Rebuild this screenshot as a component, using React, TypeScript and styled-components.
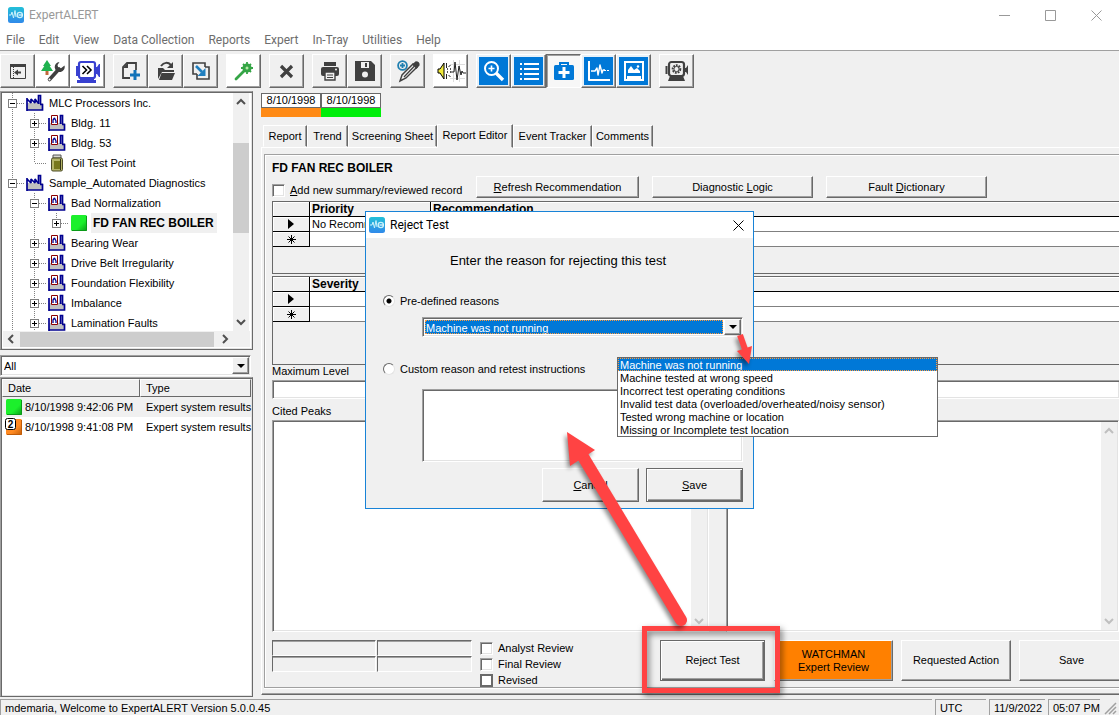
import React, { useState } from "react";
import styled, { createGlobalStyle, css } from "styled-components";

const FACE = "#f0f0f0";
const MID = "#a0a0a0";
const DARK = "#696969";
const BLUE = "#0078d7";
const RED = "#ff4343";

const Global = createGlobalStyle`
  * { box-sizing: border-box; }
  body {
    margin: 0;
    background: ${FACE};
    color: #000;
    font: 11px/16px "Liberation Sans", Arial, sans-serif;
  }
  button, input, select, textarea { font: inherit; color: inherit; margin: 0; border-radius: 0; }
`;

const raised = css`
  background: ${FACE};
  border: 1px solid;
  border-color: #fff ${DARK} ${DARK} #fff;
  box-shadow: inset -1px -1px 0 ${MID};
`;
const sunken = css`
  border: 1px solid;
  border-color: ${MID} #fff #fff ${MID};
  box-shadow: inset 1px 1px 0 ${DARK}, inset -1px -1px 0 #e3e3e3;
`;

const Window = styled.div`
  position: relative;
  display: flex;
  flex-direction: column;
  height: 100vh;
  min-height: 640px;
  overflow: hidden;
`;

/* Title and menu */
const TitleBar = styled.header`
  display: flex;
  align-items: center;
  height: 30px;
  padding-left: 8px;
  gap: 5px;
  background: #fff;
  color: #999;
  font: 12px/16px Roboto, sans-serif;
`;
const TitleText = styled.span`flex: 1;`;
const WindowButtons = styled.div`display: flex;`;
const WindowButton = styled.button`
  display: grid;
  place-items: center;
  width: 46px;
  height: 28px;
  padding: 0;
  border: 0;
  background: none;
`;
const MenuBar = styled.nav`
  display: flex;
  align-items: center;
  gap: 14px;
  height: 20px;
  padding-left: 6px;
  background: #fff;
  color: #6d6d6d;
  font: 12px/16px Roboto, sans-serif;
`;
const MenuItem = styled.button`
  padding: 0;
  border: 0;
  background: none;
  white-space: nowrap;
`;

/* Toolbar */
const Toolbar = styled.div`
  display: flex;
  gap: 8px;
  height: 41px;
  padding-top: 3px;
  border-top: 1px solid ${MID};
  flex: none;
`;
const ToolGroup = styled.div`display: flex;`;
const ToolButton = styled.button<{ $face?: "white" | "blue" | "down" }>`
  ${raised}
  display: grid;
  place-items: center;
  width: 35px;
  height: 34px;
  padding: 0;
  ${p => p.$face === "white" && css`background: #fff;`}
  ${p => p.$face === "blue" && css`
    background: ${BLUE};
    box-shadow: inset -1px -1px 0 ${MID}, inset 0 0 0 2px #e8f1f8;
  `}
  ${p => p.$face === "down" && css`
    border-color: ${DARK} #fff #fff ${DARK};
    background: #f7f7f7;
    box-shadow: inset 1px 1px 0 ${MID};
  `}
`;

/* Work area */
const Work = styled.div`display: flex; flex: 1; min-height: 0;`;
const Side = styled.aside`
  display: flex;
  flex-direction: column;
  width: 253px;
  flex: none;
`;
const TreeBox = styled.div`
  ${sunken}
  display: grid;
  grid-template-columns: 1fr 17px;
  grid-template-rows: 238px 16px;
  padding: 1px 2px 2px;
  background: #fff;
  height: 259px;
  margin-bottom: 5px;
  border-bottom-color: ${DARK};
  border-right-color: ${DARK};
`;
const Tree = styled.ul`
  margin: 0;
  padding: 0;
  list-style: none;
  overflow: hidden;
`;
const TreeRow = styled.li<{ $bold?: boolean }>`
  display: flex;
  align-items: center;
  height: 20px;
  white-space: nowrap;
  svg { flex: none; display: block; }
  ${p => p.$bold && css`font-weight: bold; font-size: 12px;`}
`;
const Expander = styled.button`padding: 0; border: 0; background: none; height: 20px;`;
const TreeIcon = styled.span`width: 18px; margin-left: 1px;`;
const TreeLabel = styled.span<{ $selected?: boolean }>`
  margin-left: 3px;
  padding: 2px 3px 2px 2px;
  ${p => p.$selected && css`background: ${FACE};`}
`;
const VScroll = styled.div`
  display: flex;
  flex-direction: column;
  align-items: center;
  justify-content: space-between;
  width: 16px;
  background: ${FACE};
  padding: 4px 0;
`;
const Thumb = styled.div`width: 16px; height: 90px; background: #cdcdcd; margin-top: -48px;`;
const HScroll = styled.div`
  grid-column: 1 / 3;
  display: flex;
  align-items: center;
  justify-content: space-between;
  background: ${FACE};
  padding: 0 20px 0 3px;
`;
const HThumb = styled.div`width: 194px; height: 15px; background: #cdcdcd; margin-left: -3px;`;

const FilterWrap = styled.div`
  ${sunken}
  display: flex;
  height: 21px;
  padding: 1px;
  background: #fff;
  margin: 0 2px 1px 0;
`;
const PlainSelect = styled.select`
  flex: 1;
  appearance: none;
  border: 0;
  padding: 0 2px;
  background: #fff;
  outline: none;
`;
const DropMark = styled.span`
  ${raised}
  display: grid;
  place-items: center;
  width: 17px;
`;
const ListBox = styled.div`
  ${sunken}
  flex: 1;
  padding: 1px;
  margin-bottom: 2px;
  background: #fff;
  border-right-color: ${DARK};
  border-bottom-color: ${DARK};
`;
const RunTable = styled.table`
  width: 100%;
  table-layout: fixed;
  border-collapse: separate;
  border-spacing: 0;
  white-space: nowrap;
  th {
    height: 17px;
    padding: 0 5px;
    text-align: left;
    font-weight: normal;
    background: ${FACE};
    border: 1px solid;
    border-color: #fff ${DARK} ${DARK} #fff;
  }
  td { height: 20px; padding: 0 0 0 6px; }
  tr:nth-child(1) td { background: ${FACE}; }
`;
const RunCell = styled.div`
  display: flex;
  align-items: center;
  gap: 2px;
  margin-left: -3px;
`;

/* Main panel */
const Main = styled.main`
  display: flex;
  flex-direction: column;
  flex: 1;
  min-width: 0;
  padding: 2px 0 4px 8px;
  overflow: hidden;
`;
const Chips = styled.div`display: flex; margin-bottom: 7px;`;
const Chip = styled.button<{ $color: string }>`
  width: 60px;
  padding: 0 0 9px;
  border: 0;
  background: ${p => p.$color};
  span {
    display: block;
    height: 15px;
    line-height: 13px;
    background: #fff;
    border: 1px solid ${DARK};
  }
`;
const Tabs = styled.div`
  display: flex;
  align-items: flex-end;
  padding-left: 2px;
  height: 24px;
  margin-bottom: -1px;
`;
const Tab = styled.button<{ $w: number; $active?: boolean }>`
  flex: 0 0 ${p => p.$w}px;
  height: 22px;
  padding: 0;
  margin-bottom: 1px;
  white-space: nowrap;
  background: ${FACE};
  border: 1px solid;
  border-color: #fff ${DARK} transparent #fff;
  box-shadow: inset -1px 0 0 ${MID};
  ${p => p.$active && css`
    height: 24px;
    margin-bottom: 0;
    padding-bottom: 3px;
    border-bottom-color: ${FACE};
    position: relative;
  `}
`;
const Page = styled.section`
  flex: 1;
  display: flex;
  min-height: 0;
  padding: 6px 0 6px 2px;
  border: 1px solid;
  border-color: #fff transparent ${DARK} #fff;
  border-right: 0;
  box-shadow: inset 0 -1px 0 ${MID};
`;
const Inner = styled.div`
  flex: 1;
  display: flex;
  flex-direction: column;
  min-width: 0;
  padding: 3px 0 6px 7px;
  border: 1px solid ${MID};
  border-right: 0;
  box-shadow: inset 1px 1px 0 #fff, 0 1px 0 #fff;
`;
const Head = styled.div`
  display: flex;
  align-items: flex-end;
  gap: 13px;
  margin-bottom: 3px;
  height: 40px;
`;
const HeadLeft = styled.div`width: 191px; flex: none;`;
const Heading = styled.h1`
  margin: 0 0 4px;
  font-size: 12px;
  line-height: 20px;
`;
const PushButton = styled.button<{ $w: number; $h: number; $color?: string; $strong?: boolean }>`
  ${raised}
  flex: 0 0 ${p => p.$w}px;
  height: ${p => p.$h}px;
  padding: 0;
  line-height: 13px;
  ${p => p.$color && css`background: ${p.$color};`}
  ${p => p.$strong && css`
    border-color: ${DARK};
    box-shadow: inset 1px 1px 0 #fff, inset -1px -1px 0 ${DARK}, inset -2px -2px 0 ${MID};
  `}
`;
const CheckLabel = styled.label`
  display: flex;
  align-items: center;
  gap: 5px;
  height: 16px;
  white-space: nowrap;
`;
const Check = styled.input<{ $flat?: boolean }>`
  ${sunken}
  appearance: none;
  width: 13px;
  height: 13px;
  flex: none;
  background: #fff;
  ${p => p.$flat && css`border: 2px solid ${DARK}; box-shadow: none;`}
`;

const GridBox = styled.div<{ $h: number }>`
  height: ${p => p.$h}px;
  flex: none;
  border: 1px solid ${DARK};
  border-right: 0;
  & + & { margin-top: 2px; }
`;
const Grid = styled.table`
  width: 100%;
  table-layout: fixed;
  border-collapse: separate;
  border-spacing: 0;
  th, td { height: 15px; padding: 0 2px; line-height: 14px; text-align: left; white-space: nowrap; }
  thead th {
    font-size: 12px;
    border-bottom: 1px solid #000;
    border-right: 1px solid #000;
    box-shadow: inset 1px 1px 0 #fff;
  }
  thead th:last-child { border-right: 0; }
  tbody th {
    border-right: 1px solid #000;
    border-bottom: 1px solid #000;
    box-shadow: inset 1px 1px 0 #fff;
    text-align: center;
  }
  tbody th svg { display: block; margin: 0 auto; }
  td { background: #fff; border-bottom: 1px solid #808080; }
`;
const FieldLabel = styled.label`display: block; height: 12px; line-height: 12px;`;
const LevelInput = styled.input`
  ${sunken}
  flex: none;
  width: 100%;
  height: 19px;
  margin: 3px 0 6px;
  border-right: 0;
  background: #fff;
`;
const Panes = styled.div`
  flex: 1;
  display: grid;
  grid-template-columns: 437px 1fr;
  gap: 17px;
  min-height: 80px;
  margin: 3px 0 8px;
`;
const Pane = styled.div`${sunken} display: flex; background: #fff; padding: 1px;`;
const PaneText = styled.textarea`
  flex: 1;
  min-width: 0;
  resize: none;
  border: 0;
  background: none;
  outline: none;
`;
const Footer = styled.div`display: flex; gap: 8px; height: 41px;`;
const Slots = styled.div`
  display: grid;
  grid-template-columns: 104px 95px;
  grid-template-rows: 16px 16px;
  gap: 0 1px;
  flex: none;
`;
const Slot = styled.div`
  border: 1px solid;
  border-color: ${DARK} #fff #fff ${DARK};
  box-shadow: inset 0 1px 0 ${MID};
`;
const Reviews = styled.div`width: 172px; flex: none;`;
const Marked = styled.div`position: relative; display: flex; margin-right: 1px;`;
const RedFrame = styled.div`
  position: absolute;
  inset: -14px -15px -12px -18px;
  border: 5px solid ${RED};
  filter: drop-shadow(2px 3px 3px rgba(0, 0, 0, 0.5));
  pointer-events: none;
  z-index: 2;
`;

const StatusBar = styled.footer`
  display: flex;
  flex: none;
  gap: 3px;
  height: 16px;
  white-space: nowrap;
  padding-right: 2px;
`;
const StatusCell = styled.span<{ $w?: number }>`
  flex: ${p => (p.$w ? `0 0 ${p.$w}px` : "1")};
  padding-left: 4px;
  border-top: 1px solid ${MID};
  border-left: 1px solid ${MID};
`;

/* Dialog */
const Dialog = styled.div`
  position: absolute;
  left: 365px;
  top: 211px;
  width: 389px;
  border: 1px solid #1883d7;
  background: ${FACE};
  z-index: 3;
`;
const DialogTitle = styled.div`
  display: flex;
  align-items: center;
  gap: 5px;
  height: 26px;
  padding-left: 3px;
  background: #fff;
  font: 12px/16px Roboto, sans-serif;
`;
const CloseButton = styled(WindowButton)`width: 30px; height: 24px;`;
const DialogBody = styled.form`padding: 14px 10px 6px 17px;`;
const Prompt = styled.p`
  margin: 0 10px 23px 0;
  text-align: center;
  font-size: 13px;
  line-height: 18px;
`;
const RadioLabel = styled.label`
  display: flex;
  align-items: center;
  gap: 5px;
  height: 16px;
`;
const Radio = styled.input`
  appearance: none;
  width: 12px;
  height: 12px;
  border: 1px solid;
  border-color: ${DARK} #e3e3e3 #e3e3e3 ${DARK};
  border-radius: 50%;
  background: #fff;
  &:checked { background: radial-gradient(circle, #000 2px, #fff 3px); }
`;
const ReasonWrap = styled(FilterWrap)`margin: 8px 0 24px 39px; height: 20px;`;
const ReasonSelect = styled(PlainSelect)`
  background: ${BLUE};
  color: #fff;
  padding: 0 1px;
  outline: 1px dotted #ff9a3c;
  outline-offset: -1px;
  margin: 1px;
`;
const CustomText = styled.textarea`
  ${sunken}
  display: block;
  width: 321px;
  height: 73px;
  margin: 12px 0 6px 39px;
  background: #fff;
  resize: none;
`;
const DialogButtons = styled.div`display: flex; justify-content: flex-end; gap: 7px;`;
const Options = styled.ul`
  position: absolute;
  left: 617px;
  top: 357px;
  width: 321px;
  margin: 0;
  padding: 0;
  list-style: none;
  background: #fff;
  border: 1px solid ${DARK};
  z-index: 4;
`;
const Option = styled.li<{ $on?: boolean }>`
  height: 13px;
  line-height: 14px;
  padding-left: 2px;
  ${p => p.$on && css`
    background: ${BLUE};
    color: #fff;
    outline: 1px dotted #ff9a3c;
    outline-offset: -1px;
  `}
`;
const Arrows = styled.svg`
  position: absolute;
  left: 550px;
  top: 325px;
  z-index: 5;
  pointer-events: none;
  filter: drop-shadow(-2px 3px 2px rgba(0, 0, 0, 0.45));
`;

const AppIcon = () => (
  <svg width="16" height="16" viewBox="0 0 16 16">
    <defs>
      <linearGradient id="logo" x1="0" y1="0" x2="0" y2="1">
        <stop offset="0" stopColor="#22c0d8" />
        <stop offset="1" stopColor="#3089ea" />
      </linearGradient>
    </defs>
    <rect width="16" height="16" rx="2.5" fill="url(#logo)" />
    <path d="M1 8h2l1-3 1.500 6L7 3.500 8 10" fill="none" stroke="#c9f2fb" strokeWidth="1" />
    <circle cx="11.800" cy="8" r="2.600" fill="none" stroke="#c9f2fb" strokeWidth="1.300" />
    <path d="M10.500 8h4" stroke="#e8fbff" strokeWidth="1.200" />
  </svg>
);

const Chevron = ({ dir, color = "#505050" }: { dir: "up" | "down" | "left" | "right"; color?: string }) => {
  const d = { up: "M1 7l4-4 4 4", down: "M1 3l4 4 4-4", left: "M7 1L3 5l4 4", right: "M3 1l4 4-4 4" }[dir];
  return <svg width="10" height="10" viewBox="0 0 10 10"><path d={d} fill="none" stroke={color} strokeWidth="2" /></svg>;
};
const Triangle = () => <svg width="8" height="4"><path d="M0 0h8L4 4z" fill="#000" /></svg>;
const CloseGlyph = ({ color }: { color: string }) => (
  <svg width="11" height="11"><path d="M.5.5l10 10M10.5.5l-10 10" stroke={color} fill="none" /></svg>
);

const Ink = "#404040";
const icons: Record<string, React.ReactNode> = {
  panel: (
    <svg width="18" height="16" viewBox="0 0 18 16">
      <path d="M1.500 1.500h15v14h-15z" fill="none" stroke={Ink} /><path d="M1 1h16v3H1z" fill={Ink} />
      <path d="M4.500 4v11" stroke={Ink} strokeDasharray="1 1" /><path d="M5 9.500l4-3v2h3v2H9v2z" fill={Ink} />
    </svg>
  ),
  treeWrench: (
    <svg width="26" height="26" viewBox="0 0 26 26">
      <path d="M7 2l4 6H3z" fill="#1fb24f" /><path d="M7 4l6 9H1z" fill="#1fb24f" />
      <path d="M5.500 13h3v4h-3z" fill="#c0693c" />
      <path d="M9.500 21.500L19 11" stroke={Ink} strokeWidth="3.600" strokeLinecap="round" />
      <path d="M24.500 7.500A5 5 0 1 1 19.500 4l-2 3 .8 2.700 2.700.5z" fill={Ink} />
      <circle cx="9.500" cy="21.500" r="1" fill="#fff" />
    </svg>
  ),
  pump: (
    <svg width="26" height="26" viewBox="0 0 26 26">
      <rect x="4" y="4" width="16" height="16" rx="2" fill="#fff" stroke="#3840d0" strokeWidth="2.200" />
      <path d="M2 8v10" stroke="#3840d0" strokeWidth="2" /><path d="M20 9h2l2-3h1v13h-1l-2-3h-2z" fill="#3840d0" />
      <path d="M5 20h14v2h2v3H2v-3h3z" fill="#3840d0" />
      <path d="M7.500 8l4 4-4 4M12 8l4 4-4 4" fill="none" stroke="#000" strokeWidth="1.600" />
    </svg>
  ),
  newDoc: (
    <svg width="20" height="20" viewBox="0 0 20 20">
      <path d="M9 17H2V6l4-4h9v7" fill="none" stroke={Ink} strokeWidth="1.800" /><path d="M2 7l5-5v5z" fill={Ink} />
      <path d="M14 9v10M9 14h10" stroke="#1172b8" strokeWidth="3" />
    </svg>
  ),
  open: (
    <svg width="20" height="20" viewBox="0 0 20 20">
      <path d="M2 18V7h5l2 2h9v2H6z" fill={Ink} /><path d="M5.500 12H19l-3 7H3z" fill={Ink} />
      <path d="M5 5c3-4 7-4 10-1" fill="none" stroke={Ink} strokeWidth="2" /><path d="M17 1v6h-6z" fill={Ink} />
    </svg>
  ),
  copy: (
    <svg width="20" height="20" viewBox="0 0 20 20">
      <path d="M6 13H2V2h12v4" fill="none" stroke={Ink} strokeWidth="1.600" />
      <path d="M14 6h4v12H6v-5" fill="none" stroke={Ink} strokeWidth="1.600" />
      <path d="M5 5l6 6" stroke="#1f7fc0" strokeWidth="2.600" /><path d="M14.500 7v8h-8z" fill="#1f7fc0" />
    </svg>
  ),
  wand: (
    <svg width="20" height="20" viewBox="0 0 20 20">
      <path d="M2 18l8-8" stroke="#35a546" strokeWidth="2.800" strokeLinecap="round" />
      <circle cx="13" cy="7" r="4.600" fill="#35a546" />
      <path d="M13 1v12M7 7h12M9 3l8 8M17 3l-8 8" stroke="#35a546" strokeWidth="1.800" />
      <circle cx="13" cy="7" r="1.500" fill="#b6e9a8" />
    </svg>
  ),
  cross: <svg width="15" height="15"><path d="M2 2l11 11M13 2L2 13" stroke={Ink} strokeWidth="3.200" /></svg>,
  print: (
    <svg width="20" height="20" viewBox="0 0 20 20">
      <path d="M4 1h12v4H4z" fill={Ink} /><rect x="1" y="6" width="18" height="9" rx="2" fill={Ink} />
      <path d="M5 11h10v8H5z" fill={FACE} stroke={Ink} strokeWidth="1.400" /><path d="M7 14h6M7 16.500h6" stroke={Ink} />
      <circle cx="16" cy="8.500" r="1" fill={FACE} />
    </svg>
  ),
  save: (
    <svg width="20" height="20" viewBox="0 0 20 20">
      <path d="M0 0h16l4 4v16H0z" fill={Ink} /><path d="M6 1h8v6H6z" fill={FACE} /><path d="M10 2h2v4h-2z" fill={Ink} />
      <circle cx="10" cy="13.500" r="3" fill={FACE} />
    </svg>
  ),
  pencil: (
    <svg width="24" height="24" viewBox="0 0 24 24">
      <circle cx="6.500" cy="6.500" r="4.400" fill="none" stroke="#1f7fb0" strokeWidth="1.800" />
      <path d="M6.500 4v5M4 6.500h5" stroke="#1f7fb0" strokeWidth="1.800" />
      <path d="M4 22l2-6L17 5l4 3L10 19z" fill={FACE} stroke={Ink} strokeWidth="1.400" />
      <path d="M17 5.500l3-2.500c2 0 3 1 3 3l-2.500 3zM8 18L18 7.500" fill={Ink} stroke={Ink} strokeWidth="1.300" />
    </svg>
  ),
  sound: (
    <svg width="30" height="26" viewBox="0 0 30 26">
      <path d="M17.500 2v22M23.500 2v22M14 6.500h15M14 20.500h15" stroke="#ddd" />
      <path d="M2 11h2l4-6v16l-4-6H2z" fill="#f0e93a" stroke="#000" strokeLinejoin="round" />
      <path d="M10.500 5v5M10.500 16v5M12.500 9l2-2M12.500 17l2 2" stroke="#222" />
      <path d="M11.500 10v6M14.500 10v6" stroke="#555" strokeDasharray="2 1" />
      <path d="M15 14h3l1-10 2 18 2-14 2 9 1-4 1 2h3" fill="none" stroke="#222" strokeLinejoin="round" />
    </svg>
  ),
  zoom: (
    <svg width="22" height="22" viewBox="0 0 22 22" fill="none" stroke="#fff">
      <circle cx="8.500" cy="8.500" r="6.500" strokeWidth="2" /><path d="M8.500 5.500v6M5.500 8.500h6" strokeWidth="1.600" />
      <path d="M13 13l7 7" strokeWidth="3.400" />
    </svg>
  ),
  list: (
    <svg width="20" height="18" viewBox="0 0 20 18" stroke="#fff" strokeWidth="2">
      <path d="M5 2h15M5 7h15M5 12h15M5 17h15M1 2h2M1 7h2M1 12h2M1 17h2" />
    </svg>
  ),
  kit: (
    <svg width="20" height="20" viewBox="0 0 20 20">
      <path d="M6 5V2h8v3" fill="none" stroke={BLUE} strokeWidth="2" /><rect y="4" width="20" height="15" rx="1.500" fill={BLUE} />
      <path d="M10 6v11M4.500 11.500h11" stroke="#fff" strokeWidth="3" />
    </svg>
  ),
  trend: (
    <svg width="24" height="22" viewBox="0 0 24 22" fill="none" stroke="#fff" strokeLinejoin="round">
      <path d="M2 1v19h21" strokeWidth="2" />
      <path d="M4 11h4l2-3 1 7 2-10 2 8 1-3h2" strokeWidth="1.400" /><path d="M17 10.500h6" strokeDasharray="2 1" />
    </svg>
  ),
  image: (
    <svg width="20" height="20" viewBox="0 0 20 20">
      <path d="M1 1h18v18H1z" fill="none" stroke="#fff" strokeWidth="2" /><path d="M3 15h14v4H3z" fill="#fff" />
      <path d="M4 12V9l3-4 3 4 3-2 3 3v2z" fill="#fff" /><circle cx="14" cy="5.500" r="1.200" fill="#fff" />
    </svg>
  ),
  motor: (
    <svg width="24" height="22" viewBox="0 0 24 22">
      <rect x="4" y="2" width="15" height="14" rx="2.500" fill="none" stroke={Ink} strokeWidth="2.200" />
      <path d="M1.500 6v8" stroke={Ink} strokeWidth="2" /><path d="M19 8h2l2-3v10l-2-3h-2z" fill={Ink} />
      <path d="M5 16h13l2 5H3z" fill={Ink} />
      <circle cx="11.500" cy="9" r="3.800" fill="none" stroke={Ink} strokeWidth="2" strokeDasharray="1.800 1" />
      <circle cx="11.500" cy="9" r="2.600" fill="none" stroke={Ink} />
    </svg>
  ),
};

type Tool = { icon: string; name: string; face?: "white" | "blue" | "down" };
const tools: Tool[][] = [
  [{ icon: "panel", name: "Panel" }, { icon: "treeWrench", name: "Setup", face: "white" }, { icon: "pump", name: "Machine", face: "white" }],
  [{ icon: "newDoc", name: "New" }, { icon: "open", name: "Open" }, { icon: "copy", name: "Copy" }],
  [{ icon: "wand", name: "Wizard", face: "white" }],
  [{ icon: "cross", name: "Delete" }],
  [{ icon: "print", name: "Print" }, { icon: "save", name: "Save file" }],
  [{ icon: "pencil", name: "Annotate" }],
  [{ icon: "sound", name: "Listen", face: "white" }],
  [
    { icon: "zoom", name: "Find", face: "blue" }, { icon: "list", name: "List", face: "blue" },
    { icon: "kit", name: "Diagnose", face: "down" }, { icon: "trend", name: "Plot", face: "blue" },
    { icon: "image", name: "Picture", face: "blue" },
  ],
  [{ icon: "motor", name: "Motor" }],
];

const Factory = ({ area }: { area?: boolean }) => (
  <svg width="18" height="18" viewBox="0 0 18 18">
    <path d="M1 16V9h16v7z" fill="#c0c0c0" />
    <path d={area ? "M1 17V4" : "M1 17V4M1 5l4 4V5l4 4V5l3 4"} fill="none" stroke="#000090" strokeWidth="1.700" strokeLinejoin="bevel" />
    <path d="M12.500 10V1.500h2V10M14 10.500h2.500V16H1" fill="none" stroke="#000090" strokeWidth="1.700" />
    {area && <path d="M3.500 1.500h6v9h-6z" fill="#fff" stroke="#8b0000" />}
    {area && <path d="M5 9V6l1.500-2L8 7v2" fill="none" stroke="#000090" strokeWidth="1.300" strokeLinejoin="bevel" />}
  </svg>
);
const Jar = () => (
  <svg width="18" height="18" viewBox="0 0 18 18">
    <path d="M5 1h8v3H5z" fill="#d8d8d0" stroke="#555" /><rect x="3.500" y="4" width="11" height="13" rx="1.500" fill="#b4b468" stroke="#4c4c26" />
    <path d="M6 7h6v8H6z" fill="#77771c" /><path d="M12.500 5v11" stroke="#333318" />
  </svg>
);
const Block = ({ id, a, b, badge }: { id: string; a: string; b: string; badge?: string }) => (
  <svg width="18" height="18" viewBox="0 0 18 18">
    <defs>
      <linearGradient id={id} x1="0" y1="0" x2="1" y2="1"><stop offset="0.600" stopColor={a} /><stop offset="1" stopColor={b} /></linearGradient>
    </defs>
    <rect x="1" y="1" width="16" height="16" rx="1.500" fill={`url(#${id})`} />
    <path d="M2 16.500h14.500V2" fill="none" stroke={b} />
    {badge && <rect x="0.500" y="0.500" width="10" height="11" rx="2" fill="#fff" stroke="#000" />}
    {badge && <text x="5.500" y="9.500" textAnchor="middle" fontSize="10" fontWeight="bold">{badge}</text>}
  </svg>
);

/* Connector cell: v = line passes through, l = last child, "-" / "+" = box, e = box ending the line */
const Connector = ({ kind }: { kind: string }) => {
  const dots = { stroke: "#808080", strokeDasharray: "1 1" };
  const box = kind === "-" || kind === "+" || kind === "e";
  return (
    <svg width="22" height="20" viewBox="0 0 22 20">
      <path d={kind === "l" || kind === "e" ? "M9.500 0v10" : "M9.500 0v20"} {...dots} />
      {kind !== "v" && <path d="M10 10.500h12" {...dots} />}
      {box && <rect x="5.500" y="6.500" width="8" height="8" fill="#fff" stroke="#808080" />}
      {box && <path d={kind === "-" ? "M7 10.500h5" : "M7 10.500h5M9.500 8v5"} stroke="#000" />}
    </svg>
  );
};

const nodes: { cells: string[]; label: string; icon: React.ReactNode; bold?: boolean }[] = [
  { cells: ["-"], label: "MLC Processors Inc.", icon: <Factory /> },
  { cells: ["v", "+"], label: "Bldg. 11", icon: <Factory area /> },
  { cells: ["v", "+"], label: "Bldg. 53", icon: <Factory area /> },
  { cells: ["v", "l"], label: "Oil Test Point", icon: <Jar /> },
  { cells: ["-"], label: "Sample_Automated Diagnostics", icon: <Factory /> },
  { cells: ["v", "-"], label: "Bad Normalization", icon: <Factory area /> },
  { cells: ["v", "v", "e"], label: "FD FAN REC BOILER", icon: <Block id="g1" a="#1cf02c" b="#0a9a18" />, bold: true },
  { cells: ["v", "+"], label: "Bearing Wear", icon: <Factory area /> },
  { cells: ["v", "+"], label: "Drive Belt Irregularity", icon: <Factory area /> },
  { cells: ["v", "+"], label: "Foundation Flexibility", icon: <Factory area /> },
  { cells: ["v", "+"], label: "Imbalance", icon: <Factory area /> },
  { cells: ["v", "+"], label: "Lamination Faults", icon: <Factory area /> },
];

const reasons = [
  "Machine was not running",
  "Machine tested at wrong speed",
  "Incorrect test operating conditions",
  "Invalid test data (overloaded/overheated/noisy sensor)",
  "Tested wrong machine or location",
  "Missing or Incomplete test location",
];
const tabs: [string, number][] = [
  ["Report", 44], ["Trend", 41], ["Screening Sheet", 89], ["Report Editor", 76], ["Event Tracker", 79], ["Comments", 61],
];

const Current = () => <svg width="6" height="10"><path d="M0 0l6 5-6 5z" fill="#000" /></svg>;
const NewRow = () => <svg width="9" height="9"><path d="M4.500 0v9M0 4.500h9M1.500 1.500l6 6M7.500 1.500l-6 6" stroke="#000" /></svg>;

function DataGrid({ first, second, value, h }: { first: string; second: string; value?: string; h: number }) {
  return (
    <GridBox $h={h}>
      <Grid>
        <colgroup><col width="37" /><col width="121" /><col /></colgroup>
        <thead><tr><th aria-label="Row" /><th>{first}</th><th>{second}</th></tr></thead>
        <tbody>
          <tr><th><Current /></th><td colSpan={2}>{value}</td></tr>
          <tr><th><NewRow /></th><td colSpan={2} /></tr>
        </tbody>
      </Grid>
    </GridBox>
  );
}

export default function App() {
  const [reason, setReason] = useState(reasons[0]);
  const [mode, setMode] = useState("preset");
  return (
    <Window>
      <Global />
      <TitleBar>
        <AppIcon />
        <TitleText>ExpertALERT</TitleText>
        <WindowButtons>
          <WindowButton aria-label="Minimize"><svg width="11" height="11"><path d="M0 5.500h11" stroke="#999" /></svg></WindowButton>
          <WindowButton aria-label="Maximize"><svg width="11" height="11"><path d="M.5.5h10v10H.5z" fill="none" stroke="#999" /></svg></WindowButton>
          <WindowButton aria-label="Close"><CloseGlyph color="#999" /></WindowButton>
        </WindowButtons>
      </TitleBar>
      <MenuBar>
        {["File", "Edit", "View", "Data Collection", "Reports", "Expert", "In-Tray", "Utilities", "Help"].map(m => (
          <MenuItem key={m}>{m}</MenuItem>
        ))}
      </MenuBar>
      <Toolbar>
        {tools.map((group, i) => (
          <ToolGroup key={i}>
            {group.map(t => (
              <ToolButton key={t.icon} $face={t.face} aria-label={t.name}>{icons[t.icon]}</ToolButton>
            ))}
          </ToolGroup>
        ))}
      </Toolbar>

      <Work>
        <Side>
          <TreeBox>
            <Tree>
              {nodes.map(n => (
                <TreeRow key={n.label} $bold={n.bold}>
                  {n.cells.map((c, i) =>
                    "+-e".includes(c)
                      ? <Expander key={i} aria-label={`Toggle ${n.label}`}><Connector kind={c} /></Expander>
                      : <Connector key={i} kind={c} />
                  )}
                  <TreeIcon>{n.icon}</TreeIcon>
                  <TreeLabel $selected={n.bold}>{n.label}</TreeLabel>
                </TreeRow>
              ))}
            </Tree>
            <VScroll><Chevron dir="up" /><Thumb /><Chevron dir="down" /></VScroll>
            <HScroll><Chevron dir="left" /><HThumb /><Chevron dir="right" /></HScroll>
          </TreeBox>
          <FilterWrap>
            <PlainSelect aria-label="Filter"><option>All</option></PlainSelect>
            <DropMark><Triangle /></DropMark>
          </FilterWrap>
          <ListBox>
            <RunTable>
              <colgroup><col width="138" /><col /></colgroup>
              <thead><tr><th>Date</th><th>Type</th></tr></thead>
              <tbody>
                <tr>
                  <td><RunCell><Block id="g2" a="#1cf02c" b="#0a9a18" />8/10/1998 9:42:06 PM</RunCell></td>
                  <td>Expert system results</td>
                </tr>
                <tr>
                  <td><RunCell><Block id="g3" a="#ff8a22" b="#c05c08" badge="2" />8/10/1998 9:41:08 PM</RunCell></td>
                  <td>Expert system results</td>
                </tr>
              </tbody>
            </RunTable>
          </ListBox>
        </Side>

        <Main>
          <Chips>
            <Chip $color="#ff8a15"><span>8/10/1998</span></Chip>
            <Chip $color="#00ee0a"><span>8/10/1998</span></Chip>
          </Chips>
          <Tabs role="tablist">
            {tabs.map(([name, w]) => (
              <Tab key={name} role="tab" $w={w} $active={name === "Report Editor"}>{name}</Tab>
            ))}
          </Tabs>
          <Page>
            <Inner>
              <Head>
                <HeadLeft>
                  <Heading>FD FAN REC BOILER</Heading>
                  <CheckLabel><Check type="checkbox" /><span><u>A</u>dd new summary/reviewed record</span></CheckLabel>
                </HeadLeft>
                <PushButton $w={163} $h={22}><u>R</u>efresh Recommendation</PushButton>
                <PushButton $w={161} $h={22}>Diagnostic <u>L</u>ogic</PushButton>
                <PushButton $w={161} $h={22}>Fault <u>D</u>ictionary</PushButton>
              </Head>
              <DataGrid first="Priority" second="Recommendation" value="No Recommendation" h={73} />
              <DataGrid first="Severity" second="" h={89} />
              <FieldLabel htmlFor="level">Maximum Level</FieldLabel>
              <LevelInput id="level" />
              <FieldLabel htmlFor="peaks">Cited Peaks</FieldLabel>
              <Panes>
                <Pane>
                  <PaneText id="peaks" />
                  <VScroll><Chevron dir="up" color="#bfbfbf" /><Chevron dir="down" color="#bfbfbf" /></VScroll>
                </Pane>
                <Pane>
                  <PaneText aria-label="Notes" />
                  <VScroll><Chevron dir="up" color="#bfbfbf" /><Chevron dir="down" color="#bfbfbf" /></VScroll>
                </Pane>
              </Panes>
              <Footer>
                <Slots><Slot /><Slot /><Slot /><Slot /></Slots>
                <Reviews>
                  <CheckLabel><Check type="checkbox" />Analyst Review</CheckLabel>
                  <CheckLabel><Check type="checkbox" />Final Review</CheckLabel>
                  <CheckLabel><Check type="checkbox" $flat />Revised</CheckLabel>
                </Reviews>
                <Marked>
                  <PushButton $w={105} $h={41} $strong>Reject Test</PushButton>
                  <RedFrame />
                </Marked>
                <PushButton $w={119} $h={41} $color="#ff8000">WATCHMAN<br />Expert Review</PushButton>
                <PushButton $w={110} $h={41}>Requested Action</PushButton>
                <PushButton $w={105} $h={41}>Save</PushButton>
              </Footer>
            </Inner>
          </Page>
        </Main>
      </Work>

      <StatusBar>
        <StatusCell>mdemaria, Welcome to ExpertALERT Version 5.0.0.45</StatusCell>
        <StatusCell $w={51}>UTC</StatusCell>
        <StatusCell $w={56}>11/9/2022</StatusCell>
        <StatusCell $w={52}>05:07 PM</StatusCell>
        <svg width="14" height="16"><path d="M2 15L13 4M6 15l7-7M10 15l3-3" stroke={MID} strokeWidth="1.500" /></svg>
      </StatusBar>

      <Dialog role="dialog" aria-label="Reject Test">
        <DialogTitle>
          <AppIcon />
          <TitleText>Reject Test</TitleText>
          <CloseButton aria-label="Close dialog"><CloseGlyph color="#000" /></CloseButton>
        </DialogTitle>
        <DialogBody onSubmit={e => e.preventDefault()}>
          <Prompt>Enter the reason for rejecting this test</Prompt>
          <RadioLabel>
            <Radio type="radio" name="mode" checked={mode === "preset"} onChange={() => setMode("preset")} />
            Pre-defined reasons
          </RadioLabel>
          <ReasonWrap>
            <ReasonSelect aria-label="Reason" value={reason} onChange={e => setReason(e.target.value)}>
              {reasons.map(r => <option key={r}>{r}</option>)}
            </ReasonSelect>
            <DropMark><Triangle /></DropMark>
          </ReasonWrap>
          <RadioLabel>
            <Radio type="radio" name="mode" checked={mode === "custom"} onChange={() => setMode("custom")} />
            Custom reason and retest instructions
          </RadioLabel>
          <CustomText aria-label="Custom reason" />
          <DialogButtons>
            <PushButton type="button" $w={97} $h={34}><u>C</u>ancel</PushButton>
            <PushButton type="submit" $w={97} $h={34} $strong><u>S</u>ave</PushButton>
          </DialogButtons>
        </DialogBody>
      </Dialog>
      <Options role="listbox" aria-label="Pre-defined reasons">
        {reasons.map(r => (
          <Option key={r} role="option" aria-selected={r === reason} $on={r === reason} onClick={() => setReason(r)}>{r}</Option>
        ))}
      </Options>
      <Arrows width="220" height="320" viewBox="550 325 220 320">
        <path d="M582 455L681 620" stroke={RED} strokeWidth="12" strokeLinecap="round" />
        <path d="M567 432l28 18-25 16z" fill={RED} />
        <path d="M740 335l6 17" stroke={RED} strokeWidth="6" />
        <path d="M749 364l-12-13 15-5z" fill={RED} />
      </Arrows>
    </Window>
  );
}
